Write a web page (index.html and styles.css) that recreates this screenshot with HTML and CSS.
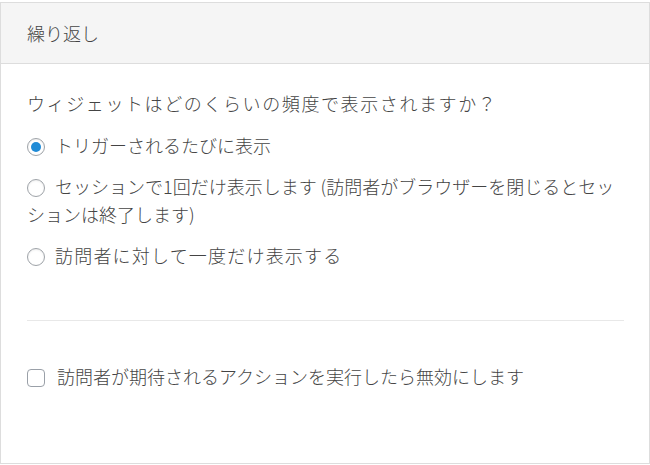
FILE: index.html
```html
<!DOCTYPE html>
<html lang="ja">
<head>
<meta charset="utf-8">
<link rel="stylesheet" href="styles.css">
</head>
<body>
<div class="panel">
  <div class="panel-header">繰り返し</div>
  <div class="panel-body">
    <p class="question">ウィジェットはどのくらいの頻度で表示されますか？</p>
    <label class="option"><span class="radio checked"></span>トリガーされるたびに表示</label>
    <label class="option"><span class="radio"></span>セッションで1回だけ表示します (訪問者がブラウザーを閉じるとセッションは終了します)</label>
    <label class="option wide"><span class="radio"></span>訪問者に対して一度だけ表示する</label>
    <hr class="divider">
    <label class="option"><span class="checkbox"></span>訪問者が期待されるアクションを実行したら無効にします</label>
  </div>
</div>
</body>
</html>
```
FILE: styles.css
```css
html, body {
  margin: 0;
  padding: 0;
  background: #fff;
}
body {
  font-family: "Noto Sans CJK JP", "Noto Sans", sans-serif;
  font-weight: 300;
  color: #444;
  font-size: 18px;
}
.panel {
  margin-top: 2px;
  width: 650px;
  height: 462px;
  box-sizing: border-box;
  border: 1px solid #ddd;
  display: flex;
  flex-direction: column;
}
.panel-header {
  height: 60px;
  background: #f5f5f5;
  border-bottom: 1px solid #ddd;
  display: flex;
  align-items: center;
  padding-left: 26px;
}
.panel-body {
  padding: 25px 25px 0 26px;
}
.question {
  margin: 0 0 14px;
  line-height: 28px;
  letter-spacing: 1.6px;
}
.option {
  display: block;
  line-height: 28px;
  margin-bottom: 13px;
}
.option.wide {
  letter-spacing: 1.2px;
}
.radio {
  display: inline-block;
  width: 16px;
  height: 16px;
  border: 1px solid #9ea3a8;
  border-radius: 50%;
  vertical-align: -3px;
  margin-right: 10px;
  position: relative;
  background: #fff;
  box-shadow: inset 0 1px 2px rgba(0, 0, 0, 0.08);
}
.radio.checked::after {
  content: "";
  position: absolute;
  left: 3px;
  top: 3px;
  width: 10px;
  height: 10px;
  border-radius: 50%;
  background: #1e8ad6;
}
.divider {
  border: 0;
  border-top: 1px solid #e8e8e8;
  margin: 51px 0 41px;
}
.checkbox {
  display: inline-block;
  width: 16px;
  height: 16px;
  border: 1px solid #9aa0a8;
  border-radius: 4px;
  vertical-align: -3px;
  margin-right: 12px;
  background: #fff;
}
```
